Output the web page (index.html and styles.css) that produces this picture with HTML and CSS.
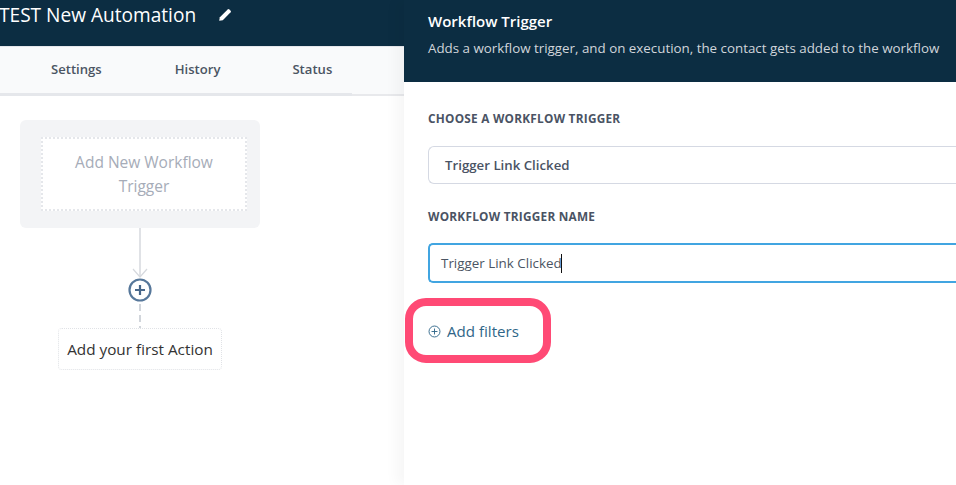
FILE: index.html
```html
<!DOCTYPE html>
<html lang="en">
<head>
<meta charset="utf-8">
<title>Workflow Trigger</title>
<link rel="stylesheet" href="styles.css">
</head>
<body>
<div class="app">
  <main class="left">
    <header class="topbar">
      <h1 class="title">TEST New Automation</h1>
      <svg class="pencil" viewBox="0 0 24 24" width="14" height="14"><path fill="#fff" d="M2 22l1.2-6.2L16.6 2.4a2 2 0 0 1 2.8 0l2.2 2.2a2 2 0 0 1 0 2.8L8.200 20.800z"/></svg>
    </header>
    <nav class="tabs">
      <div class="tab-list">
        <span class="tab tab-settings">Settings</span>
        <span class="tab tab-history">History</span>
        <span class="tab tab-status">Status</span>
      </div>
      <div class="tab-rest"></div>
    </nav>
    <section class="canvas">
      <div class="trigger-card">
        <div class="trigger-inner">Add New Workflow Trigger</div>
      </div>
      <div class="flow">
        <svg class="connector" viewBox="0 0 40 100" width="40" height="100">
          <path d="M20 0V49" stroke="#cfd3d9" stroke-width="1.300" fill="none"/>
          <path d="M13 41L20 49L27 41" stroke="#d6d9de" stroke-width="1.200" fill="none"/>
          <circle cx="20" cy="62" r="10.500" fill="#fff" stroke="#56779a" stroke-width="2.200"/>
          <path d="M15 62H25M20 57V67" stroke="#48678a" stroke-width="2.200" fill="none"/>
          <path d="M20 76V100" stroke="#d1d5db" stroke-width="2" stroke-dasharray="7 4" fill="none"/>
        </svg>
        <div class="action-card">Add your first Action</div>
      </div>
    </section>
  </main>
  <aside class="panel">
    <header class="panel-head">
      <h2 class="panel-title">Workflow Trigger</h2>
      <p class="panel-sub">Adds a workflow trigger, and on execution, the contact gets added to the workflow</p>
    </header>
    <div class="panel-body">
      <label class="field-label">CHOOSE A WORKFLOW TRIGGER</label>
      <div class="select">Trigger Link Clicked</div>
      <label class="field-label second">WORKFLOW TRIGGER NAME</label>
      <div class="input">Trigger Link Clicked<span class="caret"></span></div>
      <div class="filters">
        <svg viewBox="0 0 14 14" width="13" height="13"><circle cx="7" cy="7" r="5.900" fill="none" stroke="#2f6688" stroke-width="1"/><path d="M3.800 7H10.200M7 3.800V10.200" stroke="#2f6688" stroke-width="1" fill="none"/></svg>
        <span>Add filters</span>
      </div>
    </div>
  </aside>
</div>
</body>
</html>
```
FILE: styles.css
```css
* { box-sizing: border-box; }
html, body { margin: 0; height: 100%; overflow: hidden; }
body { font-family: "Open Sans", "Noto Sans", sans-serif; background: #fff; }
.app { display: grid; grid-template-columns: 404px 552px; height: 485px; }
.left { display: flex; flex-direction: column; background: #fff; }
.topbar { height: 46px; background: #0c2d42; display: flex; align-items: flex-start; padding-top: 2px; }
.title { margin: 0 0 0 -1px; font-size: 19.100px; line-height: 26px; font-weight: 400; color: #fff; white-space: nowrap; }
.pencil { margin: 6px 0 0 22px; }
.tabs { height: 50px; background: #f9fafb; border-top: 1px solid #e5e7eb; display: flex; font-size: 13.100px; font-weight: 600; color: #4b5563; }
.tab-list { width: 352px; display: flex; align-items: center; border-bottom: 3px solid #e5e7eb; padding-bottom: 3px; }
.tab-rest { flex: 1; border-bottom: 2px solid #e8e9ec; }
.tab { white-space: nowrap; }
.tab-settings { margin-left: 51px; }
.tab-history { margin-left: 73px; }
.tab-status { margin-left: 72px; }
.canvas { flex: 1; padding: 24px 0 0 20px; }
.trigger-card { width: 240px; height: 108px; background: #f3f4f6; border-radius: 6px; padding: 17px 13px 17px 21px; }
.trigger-inner { width: 206px; height: 74px; background: #fff; border: 2px dotted #e5e7eb; display: flex; align-items: center; justify-content: center; text-align: center; font-size: 15.500px; line-height: 24px; color: #a6acb8; padding: 0 28px; }
.flow { width: 164px; margin-left: 38px; display: flex; flex-direction: column; align-items: center; }
.connector { display: block; }
.action-card { width: 164px; height: 42px; border: 1px dotted #e0e2e6; border-radius: 4px; display: flex; align-items: center; justify-content: center; font-size: 15.300px; color: #333; white-space: nowrap; background: #fff; }
.panel { position: relative; background: #fff; box-shadow: -8px 0 12px rgba(0, 0, 0, .035); }
.panel-head { height: 82px; background: #0c2d42; padding: 9px 24px 0; }
.panel-title { margin: 0; font-size: 15px; line-height: 24px; font-weight: 600; color: #fff; }
.panel-sub { margin: 5px 0 0; font-size: 13.350px; line-height: 20px; color: #d1d5db; white-space: nowrap; }
.panel-body { padding: 27px 0 0 24px; }
.field-label { display: block; font-size: 11.800px; line-height: 18px; font-weight: 700; color: #4a5364; letter-spacing: .25px; }
.second { margin-top: 23px; }
.select { margin-top: 19px; height: 38px; margin-right: -8px; border: 1px solid #d5d9e3; border-right: 0; border-radius: 6px 0 0 6px; padding-left: 16px; font-size: 13.250px; font-weight: 600; line-height: 36px; color: #4a5364; }
.input { margin-top: 18px; height: 40px; margin-right: -8px; border: 2px solid #41a5e1; border-right: 0; border-radius: 5px 0 0 5px; padding-left: 11px; font-size: 13.400px; line-height: 36px; color: #4b5563; display: flex; align-items: center; }
.caret { width: 1px; height: 19px; background: #111; margin-left: -1px; }
.filters { width: 146px; height: 65px; margin: 15px 0 0 -23px; border: 8px solid #ff4a75; border-radius: 21px; display: flex; align-items: center; gap: 6px; padding: 1px 0 0 15px; font-size: 15.100px; color: #2f6688; white-space: nowrap; }
```
